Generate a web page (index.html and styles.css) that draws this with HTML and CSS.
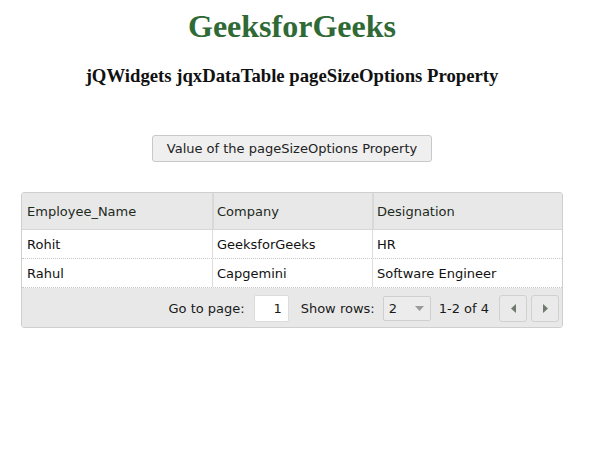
FILE: index.html
```html
<!DOCTYPE html>
<html>
<head>
<meta charset="utf-8">
<link rel="stylesheet" href="styles.css">
</head>
<body>
<div class="page">
  <h1 class="title">GeeksforGeeks</h1>
  <h3 class="subtitle">jQWidgets jqxDataTable pageSizeOptions Property</h3>
  <div class="btn-row"><button class="btn">Value of the pageSizeOptions Property</button></div>
  <div class="grid">
    <div class="row head">
      <div class="cell c1">Employee_Name</div>
      <div class="cell c2">Company</div>
      <div class="cell c3">Designation</div>
    </div>
    <div class="row body">
      <div class="cell c1">Rohit</div>
      <div class="cell c2">GeeksforGeeks</div>
      <div class="cell c3">HR</div>
    </div>
    <div class="row body">
      <div class="cell c1">Rahul</div>
      <div class="cell c2">Capgemini</div>
      <div class="cell c3">Software Engineer</div>
    </div>
    <div class="pager">
      <span class="lbl goto">Go to page:</span>
      <span class="input">1</span>
      <span class="lbl">Show rows:</span>
      <span class="select"><span>2</span><svg width="9" height="5" viewBox="0 0 9 5"><path d="M0 0h9L4.5 5z" fill="#9a9a9a"/></svg></span>
      <span class="lbl count">1-2 of 4</span>
      <span class="nav"><svg width="5" height="9" viewBox="0 0 5 9"><path d="M5 0v9L0 4.5z" fill="#6d7a6d"/></svg></span>
      <span class="nav"><svg width="5" height="9" viewBox="0 0 5 9"><path d="M0 0v9L5 4.5z" fill="#6d7a6d"/></svg></span>
    </div>
  </div>
</div>
</body>
</html>
```

FILE: styles.css
```css
html, body {
  margin: 0;
  padding: 0;
  background: #ffffff;
}
.page {
  width: 568px;
  margin: 0 8px;
  text-align: center;
  font-family: "Liberation Serif", "Times New Roman", serif;
}
.title {
  margin: 0;
  padding-top: 8px;
  font-size: 32px;
  font-weight: bold;
  line-height: 37px;
  color: #2f6a36;
}
.subtitle {
  margin: 20px 0 0;
  font-size: 18.72px;
  font-weight: bold;
  line-height: 22px;
  color: #111;
}
.btn-row {
  margin-top: 48px;
  display: flex;
  justify-content: center;
}
.btn {
  width: 280px;
  height: 27px;
  padding: 0;
  border: 1px solid #c8c8c8;
  border-radius: 3px;
  background: #efefef;
  font-family: "DejaVu Sans", Verdana, sans-serif;
  font-size: 13px;
  color: #222;
}
.grid {
  margin: 30px 0 0 13px;
  width: 540px;
  height: 134px;
  border: 1px solid #cfcfcf;
  border-radius: 3px;
  text-align: left;
  font-family: "DejaVu Sans", Verdana, sans-serif;
  font-size: 13px;
  color: #111;
  overflow: hidden;
}
.row {
  display: grid;
  grid-template-columns: 190px 160px 1fr;
}
.head {
  height: 36px;
  background: #e8e8e8;
  border-bottom: 1px solid #d6d6d6;
  color: #1c2a1c;
}
.head .cell + .cell {
  border-left: 2px solid #d9d9d9;
  padding-left: 3px;
}
.body {
  height: 28px;
  border-bottom: 1px dotted #c6c6c6;
}
.body .cell + .cell {
  border-left: 1px solid #dcdcdc;
  padding-left: 4px;
}
.cell {
  display: flex;
  align-items: center;
  padding-left: 5px;
  white-space: nowrap;
}
.head .cell { padding-top: 1px; }
.pager {
  height: 40px;
  background: #e8e8e8;
  display: flex;
  align-items: center;
  justify-content: flex-end;
  padding-right: 3px;
  color: #1a1a1a;
}
.lbl { margin-right: 8px; }
.goto { margin-right: 9px; }
.count { margin-left: 8px; margin-right: 6px; }
.input {
  width: 27px;
  height: 25px;
  padding-right: 6px;
  background: #fff;
  border: 1px solid #dcdcdc;
  border-radius: 2px;
  display: flex;
  align-items: center;
  justify-content: flex-end;
  margin-right: 12px;
}
.select {
  width: 48px;
  height: 25px;
  border: 1px solid #cfcfcf;
  border-radius: 2px;
  background: #ececec;
  display: flex;
  align-items: center;
  justify-content: space-between;
  padding: 0 6px 0 5px;
  box-sizing: border-box;
}
.nav {
  width: 28px;
  height: 27px;
  box-sizing: border-box;
  border: 1px solid #d0d0d0;
  border-radius: 3px;
  background: #eaeaea;
  display: flex;
  align-items: center;
  justify-content: center;
  margin-left: 4px;
}
```
